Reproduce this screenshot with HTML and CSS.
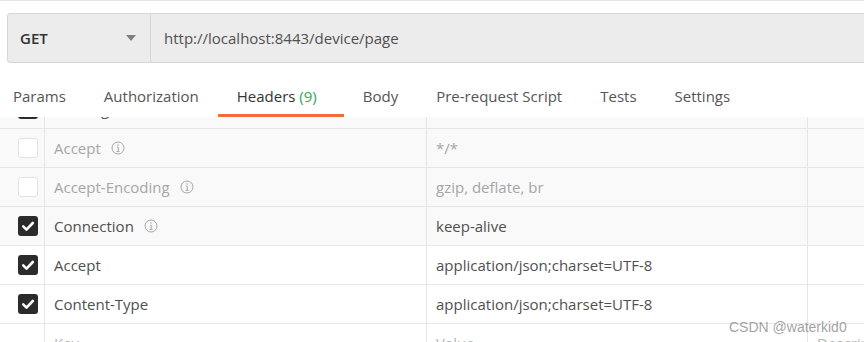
FILE: index.html
```html
<!DOCTYPE html>
<html lang="en">

<head>
  <meta charset="UTF-8" />
  <title>Postman - Headers</title>
  <link rel="stylesheet" href="styles.css">
</head>

<body>
  <div class="request-bar">
    <div class="method">
      <span>GET</span>
      <span class="caret"></span>
    </div>
    <div class="url">http://localhost:8443/device/page</div>
  </div>

  <nav class="tabs">
    <span class="tab">Params</span>
    <span class="tab">Authorization</span>
    <span class="tab active">Headers <span class="count">(9)</span></span>
    <span class="tab">Body</span>
    <span class="tab">Pre-request Script</span>
    <span class="tab">Tests</span>
    <span class="tab">Settings</span>
  </nav>

  <div class="headers-table">
    <div class="rows">
      <div class="row auto">
        <div class="cell check"><span class="box on"><svg viewBox="0 0 20 20"><path d="M5.2 10.4l3.3 3.2 6.3-6.6" /></svg></span></div>
        <div class="cell key">User-Agent <svg class="info" viewBox="0 0 14 14"><circle cx="7" cy="7" r="6" /><path d="M6 6.2h1.2v4.2M5.6 10.4h3" /><circle class="dot" cx="7" cy="4" r="0.8" /></svg></div>
        <div class="cell value">PostmanRuntime/7.28.4</div>
        <div class="cell desc"></div>
      </div>
      <div class="row auto off">
        <div class="cell check"><span class="box"></span></div>
        <div class="cell key">Accept <svg class="info" viewBox="0 0 14 14"><circle cx="7" cy="7" r="6" /><path d="M6 6.2h1.2v4.2M5.6 10.4h3" /><circle class="dot" cx="7" cy="4" r="0.8" /></svg></div>
        <div class="cell value">*/*</div>
        <div class="cell desc"></div>
      </div>
      <div class="row auto off">
        <div class="cell check"><span class="box"></span></div>
        <div class="cell key">Accept-Encoding <svg class="info" viewBox="0 0 14 14"><circle cx="7" cy="7" r="6" /><path d="M6 6.2h1.2v4.2M5.6 10.4h3" /><circle class="dot" cx="7" cy="4" r="0.8" /></svg></div>
        <div class="cell value">gzip, deflate, br</div>
        <div class="cell desc"></div>
      </div>
      <div class="row auto">
        <div class="cell check"><span class="box on"><svg viewBox="0 0 20 20"><path d="M5.2 10.4l3.3 3.2 6.3-6.6" /></svg></span></div>
        <div class="cell key">Connection <svg class="info" viewBox="0 0 14 14"><circle cx="7" cy="7" r="6" /><path d="M6 6.2h1.2v4.2M5.6 10.4h3" /><circle class="dot" cx="7" cy="4" r="0.8" /></svg></div>
        <div class="cell value">keep-alive</div>
        <div class="cell desc"></div>
      </div>
      <div class="row">
        <div class="cell check"><span class="box on"><svg viewBox="0 0 20 20"><path d="M5.2 10.4l3.3 3.2 6.3-6.6" /></svg></span></div>
        <div class="cell key">Accept</div>
        <div class="cell value">application/json;charset=UTF-8</div>
        <div class="cell desc"></div>
      </div>
      <div class="row">
        <div class="cell check"><span class="box on"><svg viewBox="0 0 20 20"><path d="M5.2 10.4l3.3 3.2 6.3-6.6" /></svg></span></div>
        <div class="cell key">Content-Type</div>
        <div class="cell value">application/json;charset=UTF-8</div>
        <div class="cell desc"></div>
      </div>
      <div class="row placeholder">
        <div class="cell check"></div>
        <div class="cell key">Key</div>
        <div class="cell value">Value</div>
        <div class="cell desc">Description</div>
      </div>
    </div>
  </div>

  <div class="watermark">CSDN @waterkid0</div>
</body>

</html>
```

FILE: styles.css
```css
html,
body {
  height: 100%;
  overflow: hidden;
}

body {
  margin: 0;
  border-top: 1px solid #e6e6e6;
  font-family: 'Open Sans', sans-serif;
  font-size: 15px;
  color: #505050;
  background: #ffffff;
  position: relative;
}

.request-bar {
  display: flex;
  height: 50px;
  box-sizing: border-box;
  margin: 12px -20px 0 7px;
  background: #ececec;
  border: 1px solid #d6d6d6;
  border-radius: 3px;
}

.method {
  display: flex;
  align-items: center;
  justify-content: space-between;
  width: 143px;
  box-sizing: border-box;
  padding: 0 14px 0 12px;
  border-right: 1px solid #d6d6d6;
  font-weight: 600;
  color: #333333;
}

.caret {
  width: 0;
  height: 0;
  border-left: 5px solid transparent;
  border-right: 5px solid transparent;
  border-top: 6px solid #808080;
}

.url {
  display: flex;
  align-items: center;
  padding-left: 13px;
  color: #505050;
}

.tabs {
  display: flex;
  white-space: nowrap;
}

.tab {
  padding: 23px 19px 8px;
  line-height: 20px;
  border-bottom: 3px solid transparent;
  color: #555555;
}

.tab:first-child {
  padding-left: 13px;
}

.tab.active {
  padding-right: 27px;
  border-bottom-color: #f26b3a;
  color: #333333;
}

.count {
  color: #2fa84f;
}

.headers-table {
  overflow: hidden;
  height: 240px;
}

.rows {
  margin-top: -27px;
}

.row {
  display: flex;
  height: 38px;
  border-bottom: 1px solid #e6e6e6;
  background: #ffffff;
}

.row.auto {
  background: #f9f9f9;
}

.cell {
  display: flex;
  align-items: center;
  flex-shrink: 0;
  box-sizing: border-box;
  padding-left: 9px;
  border-right: 1px solid #e6e6e6;
  white-space: nowrap;
}

.cell.check {
  width: 45px;
  padding-left: 18px;
}

.cell.key {
  width: 382px;
}

.cell.value {
  width: 381px;
}

.cell.desc {
  flex: 1 1 auto;
  min-width: 0;
  overflow: hidden;
  border-right: none;
}

.row.off .key,
.row.off .value {
  color: #a6a6a6;
}

.row.placeholder .cell {
  color: #b4b4b4;
}

.box {
  display: block;
  width: 20px;
  height: 20px;
  box-sizing: border-box;
  border: 1px solid #e2e2e2;
  border-radius: 3px;
  background: #ffffff;
}

.box.on {
  border: none;
  background: #2b2b2b;
}

.box svg {
  display: block;
  width: 20px;
  height: 20px;
  fill: none;
  stroke: #ffffff;
  stroke-width: 2.6;
  stroke-linecap: round;
  stroke-linejoin: round;
}

.info {
  width: 14px;
  height: 14px;
  margin-left: 10px;
  fill: none;
  stroke: #a8a8a8;
  stroke-width: 1;
}

.info .dot {
  fill: #a8a8a8;
  stroke: none;
}

.watermark {
  position: absolute;
  top: 318px;
  left: 729px;
  font-family: 'Liberation Sans', Arial, sans-serif;
  font-size: 14px;
  line-height: 16px;
  color: rgba(120, 120, 120, 0.7);
}
```
